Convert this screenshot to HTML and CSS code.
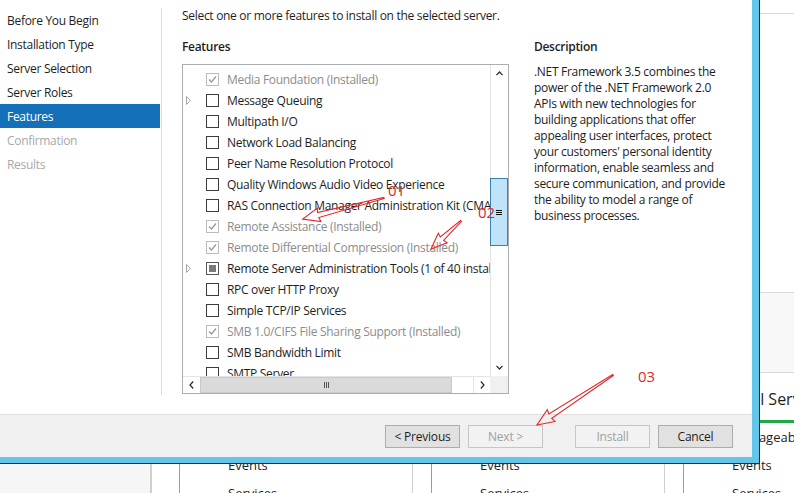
FILE: index.html
```html
<!DOCTYPE html>
<html>
<head>
<meta charset="utf-8">
<title>Add Roles and Features Wizard</title>
<link rel="stylesheet" href="styles.css">
</head>
<body>
<div class="desktop">
  <div class="bgwin">
    <div class="bg-top"></div>
    <div class="bg-main"></div>
    <div class="bg-band"></div>
    <div class="bg-tiles">
      <div class="bg-side"></div>
      <div class="tiles">
        <div class="tile">
          <div class="tile-title">Local Server</div>
          <div class="tile-bar"></div>
          <ul class="tile-items"><li>Manageability</li><li>Events</li><li>Services</li></ul>
        </div>
        <div class="tile">
          <div class="tile-title">File and Storage Services</div>
          <div class="tile-bar"></div>
          <ul class="tile-items"><li>Manageability</li><li>Events</li><li>Services</li></ul>
        </div>
        <div class="tile">
          <div class="tile-title">All Servers</div>
          <div class="tile-bar"></div>
          <ul class="tile-items"><li>Manageability</li><li>Events</li><li>Services</li></ul>
        </div>
      </div>
    </div>
  </div>

  <div class="dialog-frame">
    <div class="dialog">
      <div class="dlg-body">
        <nav class="steps">
          <div class="step">Before You Begin</div>
          <div class="step">Installation Type</div>
          <div class="step">Server Selection</div>
          <div class="step">Server Roles</div>
          <div class="step active">Features</div>
          <div class="step off">Confirmation</div>
          <div class="step off">Results</div>
        </nav>
        <div class="sep"></div>
        <div class="content">
          <p class="intro">Select one or more features to install on the selected server.</p>
          <div class="cols">
            <section class="features">
              <h2>Features</h2>
              <div class="listbox">
                <div class="list">
                  <div class="row dim"><span class="exp"></span><span class="cb dis"><svg viewBox="0 0 11 11"><polyline points="2,5.5 4.5,8 9,2.5"/></svg></span>Media Foundation (Installed)</div>
                  <div class="row"><span class="exp"><svg viewBox="0 0 5 9"><path d="M0.5 0.5 L4.5 4.5 L0.5 8.5 Z"/></svg></span><span class="cb"></span>Message Queuing</div>
                  <div class="row"><span class="exp"></span><span class="cb"></span>Multipath I/O</div>
                  <div class="row"><span class="exp"></span><span class="cb"></span>Network Load Balancing</div>
                  <div class="row"><span class="exp"></span><span class="cb"></span>Peer Name Resolution Protocol</div>
                  <div class="row"><span class="exp"></span><span class="cb"></span>Quality Windows Audio Video Experience</div>
                  <div class="row"><span class="exp"></span><span class="cb"></span>RAS Connection Manager Administration Kit (CMAK)</div>
                  <div class="row dim"><span class="exp"></span><span class="cb dis"><svg viewBox="0 0 11 11"><polyline points="2,5.5 4.5,8 9,2.5"/></svg></span>Remote Assistance (Installed)</div>
                  <div class="row dim"><span class="exp"></span><span class="cb dis"><svg viewBox="0 0 11 11"><polyline points="2,5.5 4.5,8 9,2.5"/></svg></span>Remote Differential Compression (Installed)</div>
                  <div class="row"><span class="exp"><svg viewBox="0 0 5 9"><path d="M0.5 0.5 L4.5 4.5 L0.5 8.5 Z"/></svg></span><span class="cb part"><i></i></span>Remote Server Administration Tools (1 of 40 installed)</div>
                  <div class="row"><span class="exp"></span><span class="cb"></span>RPC over HTTP Proxy</div>
                  <div class="row"><span class="exp"></span><span class="cb"></span>Simple TCP/IP Services</div>
                  <div class="row dim"><span class="exp"></span><span class="cb dis"><svg viewBox="0 0 11 11"><polyline points="2,5.5 4.5,8 9,2.5"/></svg></span>SMB 1.0/CIFS File Sharing Support (Installed)</div>
                  <div class="row"><span class="exp"></span><span class="cb"></span>SMB Bandwidth Limit</div>
                  <div class="row"><span class="exp"></span><span class="cb"></span>SMTP Server</div>
                </div>
                <div class="vscroll">
                  <div class="sbtn"><svg width="7" height="5" viewBox="0 0 7 5"><polyline points="0.5,4.2 3.5,1 6.5,4.2"/></svg></div>
                  <div class="vtrack">
                    <div class="vthumb"><span class="grip"><i></i><i></i><i></i></span></div>
                  </div>
                  <div class="sbtn"><svg width="7" height="5" viewBox="0 0 7 5"><polyline points="0.5,0.8 3.5,4 6.5,0.8"/></svg></div>
                </div>
                <div class="hscroll">
                  <div class="hbtn"><svg width="5" height="8" viewBox="0 0 5 8"><polyline points="4.2,0.5 1,4 4.2,7.5"/></svg></div>
                  <div class="hthumb"><span class="hgrip"><i></i><i></i><i></i></span></div>
                  <div class="htrack"></div>
                  <div class="hbtn right"><svg width="5" height="8" viewBox="0 0 5 8"><polyline points="0.8,0.5 4,4 0.8,7.5"/></svg></div>
                </div>
                <div class="corner"></div>
              </div>
            </section>
            <section class="desc">
              <h2>Description</h2>
              <p>.NET Framework 3.5 combines the<br>power of the .NET Framework 2.0<br>APIs with new technologies for<br>building applications that offer<br>appealing user interfaces, protect<br>your customers' personal identity<br>information, enable seamless and<br>secure communication, and provide<br>the ability to model a range of<br>business processes.</p>
            </section>
          </div>
        </div>
      </div>
      <div class="dlg-foot">
        <button class="btn">&lt; Previous</button>
        <button class="btn dis next">Next &gt;</button>
        <button class="btn dis">Install</button>
        <button class="btn">Cancel</button>
      </div>
    </div>
  </div>

  <svg class="annot" width="794" height="493" viewBox="0 0 794 493">
    <g class="arrow" transform="translate(384 198) rotate(165.5)">
      <polygon points="0,-0.6 68,-2.6 67,-7 84,0 67,7 68,2.6 0,0.6"/>
    </g>
    <g class="arrow" transform="translate(461 221) rotate(137)">
      <polygon points="0,-0.6 26,-2.4 25,-6.5 41,0 25,6.5 26,2.4 0,0.6"/>
    </g>
    <g class="arrow" transform="translate(613 375) rotate(146.7)">
      <polygon points="0,-0.6 75,-2.6 74,-7 91,0 74,7 75,2.6 0,0.6"/>
    </g>
    <text x="388" y="196">01</text>
    <text x="478" y="218">02</text>
    <text x="638" y="382">03</text>
  </svg>
</div>
</body>
</html>
```

FILE: styles.css
```css
* { box-sizing: border-box; margin: 0; padding: 0; }
html, body { width: 794px; height: 493px; overflow: hidden; }
body {
  font-family: "Open Sans", "Noto Sans", sans-serif;
  font-size: 12px;
  letter-spacing: -0.3px;
  color: #1e1e1e;
  background: #fff;
}
.desktop { position: relative; width: 794px; height: 493px; overflow: hidden; }

/* background Server Manager window */
.bgwin {
  position: absolute; left: 0; top: 0;
  width: 1000px; height: 493px;
  background: #fff;
  display: flex; flex-direction: column;
  overflow: hidden;
}
.bg-top { flex: none; height: 14px; border-bottom: 1px solid #d9d9d9; }
.bg-main { flex: none; height: 279px; border-bottom: 1px solid #d9d9d9; }
.bg-band { flex: none; height: 80px; background: #f8f8f8; border-bottom: 1px solid #d9d9d9; }
.bg-tiles { flex: none; height: 160px; display: flex; }
.bg-side { width: 152px; background: #f6f6f6; border-right: 2px solid #cfcfcf; }
.tiles { display: flex; gap: 18px; margin-left: 27px; }
.tile {
  width: 234px;
  border-left: 1px solid #9c9c9c;
  border-right: 1px solid #cfcfcf;
  padding-top: 16px;
}
.tile-title { font-size: 16px; line-height: 20px; padding-left: 62px; white-space: nowrap; color: #1e1e1e; letter-spacing: 0; }
.tile-bar { height: 3px; margin-top: 11px; background: #1fa845; }
.tile-items { list-style: none; padding-left: 48px; font-size: 13px; line-height: 28px; letter-spacing: 0; }

/* dialog */
.dialog-frame {
  position: absolute; left: 0; top: 0;
  width: 760px; height: 464px;
  background: #1d2c38;
  padding: 0 1px 1px 0;
}
.dialog {
  width: 759px; height: 463px;
  border-right: 7px solid #62c5e9;
  border-bottom: 6px solid #62c5e9;
  background: #fff;
  display: flex; flex-direction: column;
}
.dlg-body { height: 414px; flex: none; display: flex; }

.steps { width: 160px; padding-top: 8px; }
.step { height: 24px; line-height: 24px; padding: 1px 0 0 7px; white-space: nowrap; }
.step.active { background: #1470b9; color: #fff; }
.step.off { color: #a8a8a8; }
.sep { width: 1px; height: 387px; margin: 8px 0 0 1px; background: #dadada; }

.content { padding-left: 20px; flex: 1; }
.intro { line-height: 16px; margin-top: 8px; white-space: nowrap; }
.cols { display: flex; margin-top: 15px; }
h2 { font-size: 12px; font-weight: 600; line-height: 16px; }
.features { width: 327px; }
.desc { margin-left: 25px; }
.desc p { margin-top: 9px; line-height: 16px; white-space: nowrap; }

.listbox {
  margin-top: 9px;
  width: 327px; height: 330px;
  border: 1px solid #abadb3;
  display: grid;
  grid-template-columns: 1fr 18px;
  grid-template-rows: 1fr 17px;
}
.list { overflow: hidden; padding-top: 4px; background: #fff; }
.row { height: 21px; display: flex; align-items: center; white-space: nowrap; }
.row.dim { color: #8c8c8c; }
.exp { width: 23px; height: 9px; flex: none; display: flex; padding-left: 3px; }
.exp svg { width: 5px; height: 9px; }
.exp path { fill: none; stroke: #a6a6a6; stroke-width: 1; }
.cb {
  width: 13px; height: 13px; flex: none;
  border: 1px solid #3c3c3c; background: #fff;
  margin-right: 8px;
  display: flex;
}
.cb svg { width: 11px; height: 11px; }
.cb polyline { fill: none; stroke: #9a9a9a; stroke-width: 1.3; }
.cb.dis { border-color: #bcbcbc; }
.cb.part { border-color: #555; }
.cb.part i { display: block; width: 7px; height: 7px; margin: 2px; background: #7a7a7a; }

.vscroll { display: flex; flex-direction: column; border-left: 1px solid #e4e4e4; background: #fff; }
.sbtn { height: 17px; display: flex; align-items: center; justify-content: center; }
.sbtn polyline, .hbtn polyline { fill: none; stroke: #2a2a2a; stroke-width: 1.2; }
.vtrack { flex: 1; padding-top: 96px; }
.vthumb {
  height: 68px;
  margin-left: -1px;
  background: #bfe4f9;
  border: 1px solid #3c7fb1;
  display: flex; align-items: center; justify-content: center;
}
.grip { display: flex; flex-direction: column; gap: 1px; }
.grip i { display: block; width: 6px; height: 1px; background: #111; }

.hscroll { display: flex; border-top: 1px solid #e4e4e4; background: #fff; }
.hbtn { width: 17px; display: flex; align-items: center; justify-content: center; }
.hthumb {
  width: 252px;
  background: #dadada;
  border: 1px solid #c9c9c9;
  display: flex; align-items: center; justify-content: center;
}
.hgrip { display: flex; gap: 1px; }
.hgrip i { display: block; width: 1px; height: 6px; background: #555; }
.htrack { flex: 1; }
.hbtn.right { border-left: 1px solid #e4e4e4; }
.corner { background: #f0f0f0; }

.dlg-foot {
  height: 43px;
  flex: none;
  border-top: 1px solid #dfdfdf;
  background: #f0f0f0;
  display: flex; justify-content: flex-end;
  gap: 8px;
  padding: 10px 19px 0 0;
}
.btn {
  width: 75px; height: 23px;
  border: 1px solid #adadad;
  background: #e1e1e1;
  font-family: inherit; font-size: 12px; color: #1e1e1e;
  letter-spacing: -0.2px;
  line-height: 21px; text-align: center;
}
.btn.dis { border-color: #c6c6c6; background: #f2f2f2; color: #a0a0a0; }
.btn.next { margin-right: 24px; }

/* annotations overlay */
.annot { position: absolute; left: 0; top: 0; pointer-events: none; }
.arrow polygon { fill: none; stroke: #e3262a; stroke-width: 1.1; stroke-linejoin: miter; }
.annot text { font-family: "Open Sans", "Noto Sans", sans-serif; font-size: 15px; letter-spacing: 0; fill: #e3262a; }
```
